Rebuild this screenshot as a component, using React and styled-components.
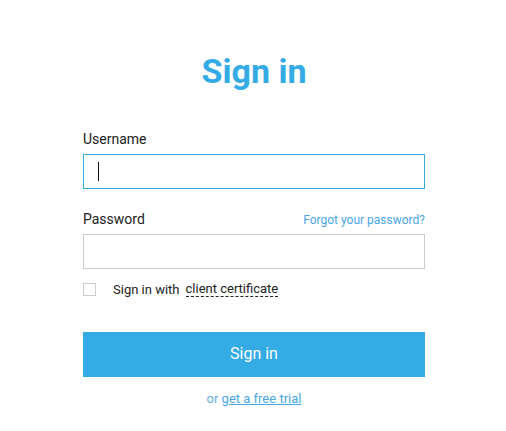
import React from "react";
import styled, { createGlobalStyle } from "styled-components";

const GlobalStyle = createGlobalStyle`
  html, body {
    margin: 0;
    padding: 0;
    background: #ffffff;
    font-family: Roboto, "Liberation Sans", sans-serif;
  }
  * { box-sizing: border-box; }
`;

const Page = styled.div`
  width: 506px;
  height: 431px;
  display: flex;
  justify-content: center;
  padding: 48px 0 0 2px;
`;

const Form = styled.form`
  width: 342px;
  display: flex;
  flex-direction: column;
`;

const Title = styled.h1`
  margin: 0 0 36px;
  text-align: center;
  font-size: 34px;
  line-height: 46px;
  font-weight: 700;
  color: #34abe5;
`;

const LabelRow = styled.div`
  display: flex;
  justify-content: space-between;
  align-items: baseline;
  margin-bottom: 6px;
`;

const Label = styled.label`
  font-size: 14px;
  line-height: 18px;
  color: #222;
`;

const SmallLink = styled.a`
  font-size: 12px;
  color: #4aa6e8;
  text-decoration: none;
`;

const Field = styled.div`
  position: relative;
  margin-bottom: ${(p) => p.$gap || 0}px;
`;

const Input = styled.input`
  display: block;
  width: 100%;
  height: 35px;
  border: 1px solid ${(p) => (p.$active ? "#34abe5" : "#cccccc")};
  outline: none;
  padding: 0 15px;
  font-size: 14px;
  font-family: inherit;
`;

const Caret = styled.span`
  position: absolute;
  left: 15px;
  top: 8px;
  width: 1px;
  height: 19px;
  background: #111;
`;

const CheckRow = styled.div`
  display: flex;
  align-items: center;
  margin-top: 12px;
  font-size: 13px;
  color: #222;
`;

const Box = styled.span`
  width: 13px;
  height: 13px;
  border: 1px solid #cccccc;
  margin-right: 17px;
`;

const Dotted = styled.span`
  margin-left: 6px;
  border-bottom: 1px dashed #222;
  line-height: 15px;
`;

const Button = styled.button`
  margin-top: 35px;
  height: 45px;
  padding: 0 0 2px;
  border: none;
  background: #34abe5;
  color: #ffffff;
  font-family: inherit;
  font-size: 16px;
`;

const Footer = styled.p`
  margin: 14px 0 0;
  text-align: center;
  font-size: 13px;
  color: #6aaee6;
`;

const TrialLink = styled.a`
  color: #4aa6e8;
  text-decoration: underline;
`;

export default function App() {
  return (
    <>
      <GlobalStyle />
      <Page>
        <Form>
          <Title>Sign in</Title>
          <LabelRow>
            <Label>Username</Label>
          </LabelRow>
          <Field $gap={21}>
            <Input $active type="text" />
            <Caret />
          </Field>
          <LabelRow>
            <Label>Password</Label>
            <SmallLink href="#">Forgot your password?</SmallLink>
          </LabelRow>
          <Field>
            <Input type="password" />
          </Field>
          <CheckRow>
            <Box />
            Sign in with
            <Dotted>client certificate</Dotted>
          </CheckRow>
          <Button type="button">Sign in</Button>
          <Footer>
            or <TrialLink href="#">get a free trial</TrialLink>
          </Footer>
        </Form>
      </Page>
    </>
  );
}
